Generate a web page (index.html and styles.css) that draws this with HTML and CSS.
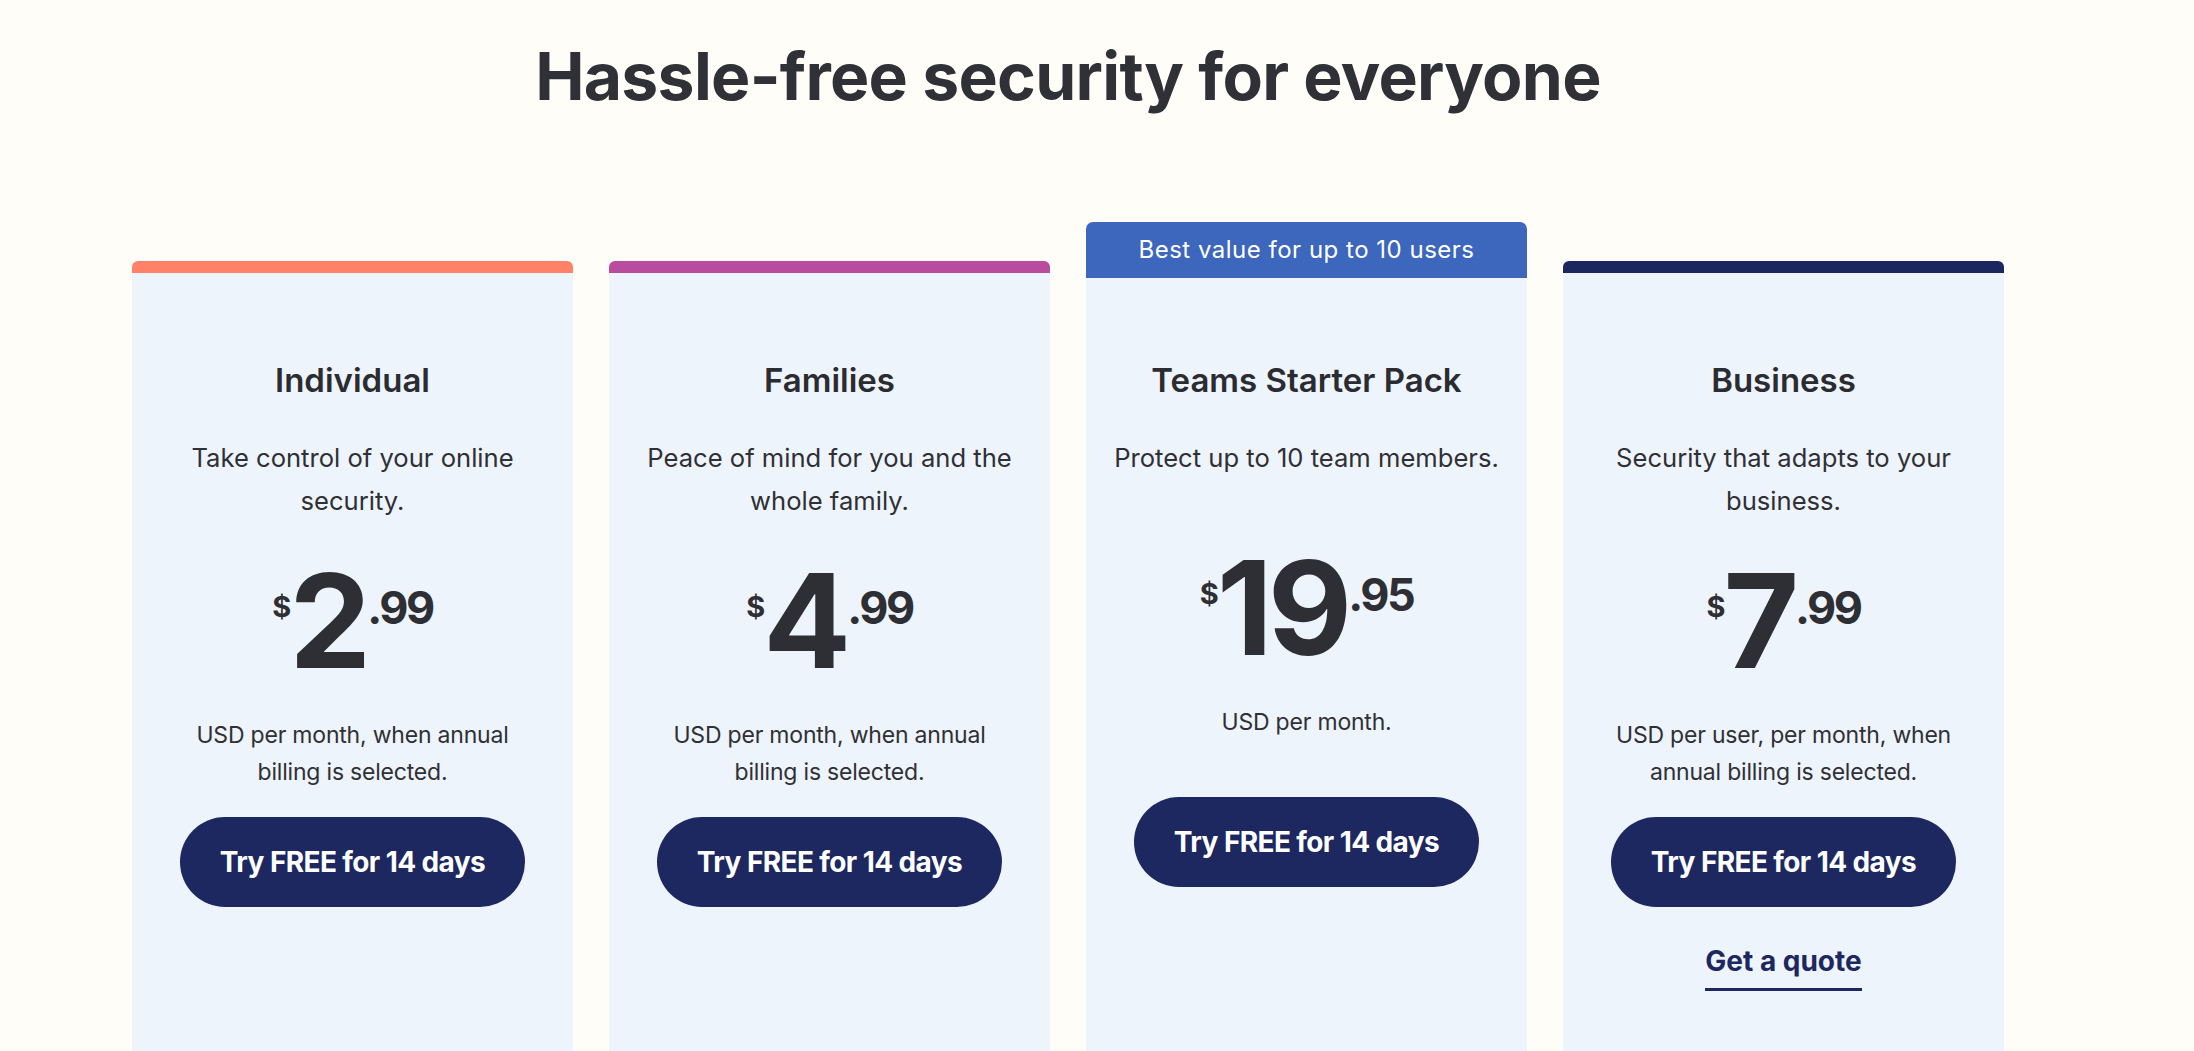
FILE: index.html
```html
<!DOCTYPE html>
<html lang="en">
<head>
<meta charset="utf-8">
<title>Pricing</title>
<link rel="stylesheet" href="styles.css">
</head>
<body>
<main class="page">
  <h1 class="headline">Hassle-free security for everyone</h1>
  <section class="plans">
    <article class="card">
      <div class="card-bar bar-coral"></div>
      <div class="card-body">
        <h2 class="plan-title">Individual</h2>
        <p class="plan-desc">Take control of your online security.</p>
        <div class="price"><span class="cur">$</span><span class="amount">2</span><span class="cents">.99</span></div>
        <p class="plan-note">USD per month, when annual billing is selected.</p>
        <a class="btn" href="#">Try FREE for 14 days</a>
      </div>
    </article>
    <article class="card">
      <div class="card-bar bar-magenta"></div>
      <div class="card-body">
        <h2 class="plan-title">Families</h2>
        <p class="plan-desc">Peace of mind for you and the whole family.</p>
        <div class="price"><span class="cur">$</span><span class="amount">4</span><span class="cents">.99</span></div>
        <p class="plan-note">USD per month, when annual billing is selected.</p>
        <a class="btn" href="#">Try FREE for 14 days</a>
      </div>
    </article>
    <article class="card card-featured">
      <div class="card-badge">Best value for up to 10 users</div>
      <div class="card-body">
        <h2 class="plan-title">Teams Starter Pack</h2>
        <p class="plan-desc">Protect up to 10 team members.</p>
        <div class="price"><span class="cur">$</span><span class="amount">19</span><span class="cents">.95</span></div>
        <p class="plan-note">USD per month.</p>
        <a class="btn" href="#">Try FREE for 14 days</a>
      </div>
    </article>
    <article class="card">
      <div class="card-bar bar-navy"></div>
      <div class="card-body">
        <h2 class="plan-title">Business</h2>
        <p class="plan-desc">Security that adapts to your business.</p>
        <div class="price"><span class="cur">$</span><span class="amount">7</span><span class="cents">.99</span></div>
        <p class="plan-note">USD per user, per month, when annual billing is selected.</p>
        <a class="btn" href="#">Try FREE for 14 days</a>
        <a class="quote-link" href="#">Get a quote</a>
      </div>
    </article>
  </section>
</main>
</body>
</html>
```

FILE: styles.css
```css
* { box-sizing: border-box; }

html, body {
  margin: 0;
  padding: 0;
  background: #fffdf8;
  overflow: hidden;
}

body {
  font-family: Inter, "Noto Sans", sans-serif;
  color: #2f3035;
}

.page {
  width: 1872px;
  margin-left: 132px;
}

.headline {
  margin: 36px 0 0;
  font-family: Inter, sans-serif;
  font-weight: 700;
  font-size: 66px;
  line-height: 80px;
  letter-spacing: -0.7px;
  color: #303136;
  text-align: center;
}

.plans {
  margin-top: 106px;
  display: grid;
  grid-template-columns: repeat(4, 441px);
  column-gap: 36px;
  align-items: stretch;
}

.card {
  display: flex;
  flex-direction: column;
  margin-top: 39px;
}

.card-featured { margin-top: 0; }

.card-bar {
  height: 12px;
  border-radius: 6px 6px 0 0;
}

.bar-coral { background: #ff8168; }
.bar-magenta { background: #b94c9e; }
.bar-navy { background: #1c2760; }

.card-badge {
  height: 56px;
  border-radius: 7px 7px 0 0;
  background: #3d66bd;
  color: #ffffff;
  font-size: 24px;
  line-height: 56px;
  letter-spacing: 0.5px;
  text-align: center;
}

.card-body {
  flex: 1;
  background: #eef4fb;
  padding: 87px 24px 160px;
  display: flex;
  flex-direction: column;
  align-items: center;
  text-align: center;
}

.card-featured .card-body { padding-top: 82px; }

.plan-title {
  margin: 0;
  font-weight: 600;
  font-size: 33px;
  line-height: 40px;
  color: #2b2c31;
}

.plan-desc {
  margin: 36px 0 0;
  font-size: 25.6px;
  line-height: 43px;
  max-width: 393px;
  min-height: 73px;
}

.price {
  margin-top: 34px;
  display: flex;
  align-items: flex-start;
  justify-content: center;
  height: 133px;
  font-family: Inter, sans-serif;
  font-weight: 700;
  color: #2e2f34;
}

.cur {
  font-size: 29px;
  line-height: 29px;
  margin-top: 36px;
  margin-right: -2px;
}

.amount {
  font-size: 130px;
  line-height: 130px;
  letter-spacing: -5px;
}

.cents {
  font-size: 45px;
  line-height: 45px;
  margin-top: 29px;
  margin-left: 1px;
  letter-spacing: -2.5px;
}

.plan-note {
  margin: 28px 0 0;
  font-size: 23px;
  line-height: 37px;
  max-width: 360px;
  min-height: 67px;
  letter-spacing: -0.2px;
}

.btn {
  margin-top: 26px;
  height: 90px;
  padding: 0 40px;
  border-radius: 45px;
  background: #1d2760;
  color: #ffffff;
  font-weight: 700;
  font-size: 28px;
  line-height: 90px;
  text-decoration: none;
  letter-spacing: -0.6px;
  white-space: nowrap;
}

.quote-link {
  margin-top: 37px;
  font-weight: 700;
  font-size: 28px;
  line-height: 34px;
  padding-bottom: 10px;
  border-bottom: 3px solid #1d2760;
  color: #1d2760;
  text-decoration: none;
}
```
